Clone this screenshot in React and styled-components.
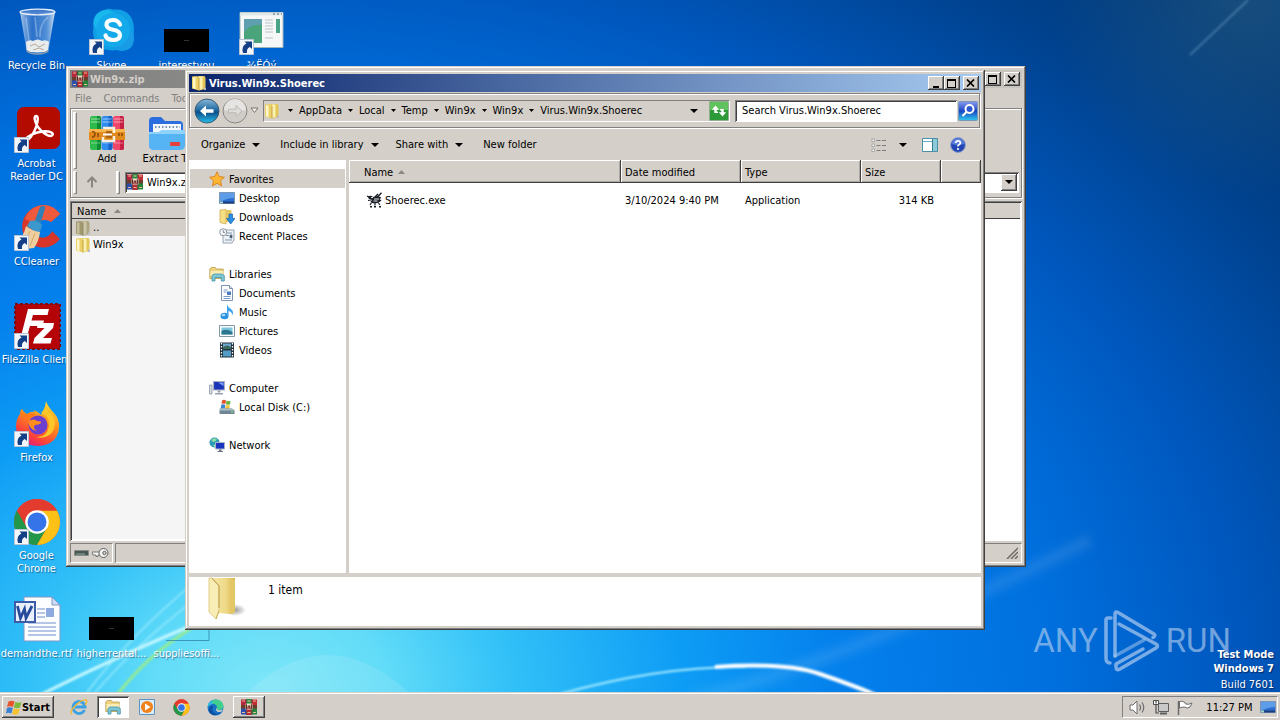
import React from "react";
import styled, { createGlobalStyle, css } from "styled-components";

const FACE = "#d4cfc8";

const GlobalStyle = createGlobalStyle`
  *, *::before, *::after { box-sizing: border-box; }
  html, body, #root { height: 100%; margin: 0; }
  body {
    font: 11px/13px "DejaVu Sans Condensed", "DejaVu Sans", "Noto Sans", sans-serif;
    color: #000;
    overflow: hidden;
  }
  button, input, select { font: inherit; color: inherit; margin: 0; padding: 0; border: 0; }
  svg { display: block; flex: none; }
`;

const raised = css`
  background: ${FACE};
  box-shadow: inset -1px -1px #404040, inset 1px 1px #fff, inset -2px -2px #808080;
`;
const sunken = css`
  box-shadow: inset 1px 1px #808080, inset -1px -1px #fff, inset 2px 2px #404040;
`;

/* ---------- page ---------- */

const Screen = styled.div`
  height: 100vh;
  display: flex;
  flex-direction: column;
  background: #0068d0;
`;

const Desktop = styled.main`
  flex: 1;
  min-height: 0;
  position: relative;
  overflow: hidden;
`;

const WallpaperArt = styled.svg`
  position: absolute;
  inset: 0;
  width: 100%;
  height: 100%;
`;

const IconGrid = styled.div`
  position: relative;
  display: grid;
  grid-template-columns: repeat(4, 73px);
  grid-auto-rows: 98px;
  column-gap: 2px;
  padding-top: 8px;
`;

const Shortcut = styled.button`
  grid-column: ${(p) => p.$col};
  grid-row: ${(p) => p.$row};
  display: flex;
  flex-direction: column;
  align-items: center;
  justify-content: flex-start;
  gap: 3px;
  background: none;
  color: #fff;
  text-align: center;
  text-shadow: 1px 1px 1px rgba(0, 20, 70, 0.5);
`;

const ShortcutLabel = styled.span`
  width: max-content;
  max-width: 76px;
`;

const Brand = styled.div`
  position: absolute;
  right: 49px;
  bottom: 20px;
  display: flex;
  align-items: center;
  gap: 5px;
  color: rgba(190, 212, 240, 0.6);
  font: 33px/62px "Roboto", sans-serif;
`;

const BuildInfo = styled.div`
  position: absolute;
  right: 6px;
  bottom: 0;
  color: #fff;
  text-align: right;
  font-weight: 700;
  line-height: 14px;
  text-shadow: 1px 1px 1px rgba(0, 20, 70, 0.7);
  p { margin: 0; }
  p:last-child { margin-top: 2px; font-weight: 400; }
`;

/* ---------- windows ---------- */

const Window = styled.section`
  position: absolute;
  left: ${(p) => p.$x}px;
  top: ${(p) => p.$y}px;
  width: ${(p) => p.$w}px;
  min-height: ${(p) => p.$h}px;
  padding: 4px;
  display: flex;
  flex-direction: column;
  background: ${FACE};
  box-shadow: inset -1px -1px #404040, inset 1px 1px ${FACE}, inset -2px -2px #808080, inset 2px 2px #fff;
`;

const TitleBar = styled.header`
  height: 18px;
  display: flex;
  align-items: center;
  gap: 2px;
  padding: 0 2px;
  color: ${(p) => (p.$active ? "#fff" : "#d4cfc8")};
  background: ${(p) =>
    p.$active
      ? "linear-gradient(90deg, #0a246a, #a6caf0)"
      : "linear-gradient(90deg, #808080, #c8c4be)"};
`;

const TitleText = styled.h1`
  flex: 1;
  margin: 0;
  font-size: 11px;
  font-weight: 700;
`;

const TitleButtons = styled.div`
  display: flex;
  button:last-child { margin-left: 3px; }
`;

const TitleButton = styled.button`
  width: 16px;
  height: 14px;
  display: grid;
  place-items: center;
  ${raised}
`;

/* ---------- explorer ---------- */

const Rebar = styled.div`
  height: 35px;
  margin: 1px 1px 1px 0;
  padding: 0 1px 0 3px;
  display: flex;
  align-items: center;
  border: 1px solid #808080;
  box-shadow: inset 1px 1px #fff, 1px 1px #fff;
`;

const NavButton = styled.button`
  width: ${(p) => p.$w}px;
  height: 26px;
  background: none;
  display: grid;
  place-items: center;
`;

const AddressBar = styled.nav`
  flex: 1;
  height: 22px;
  margin-left: 4px;
  display: flex;
  align-items: center;
  border: 1px solid;
  border-color: #808080 #fff #fff #808080;
`;

const FolderSlot = styled.span`
  width: 24px;
`;

const Crumb = styled.a`
  color: inherit;
  text-decoration: none;
  padding: 0 6px;
`;

const IconButton = styled.button`
  width: ${(p) => p.$w || 20}px;
  height: 22px;
  display: grid;
  place-items: center;
  background: none;
`;

const SearchInput = styled.input`
  width: 222px;
  height: 22px;
  margin-left: 5px;
  padding: 0 7px;
  background: #fff;
  ${sunken}
  &::placeholder { color: #000; opacity: 1; }
`;

const CommandBar = styled.div`
  height: 31px;
  padding: 0 12px;
  display: flex;
  align-items: center;
`;

const Command = styled.button`
  display: flex;
  align-items: center;
  gap: 7px;
  margin-right: ${(p) => p.$gap || 20}px;
  background: none;
`;

const Spacer = styled.span`
  flex: 1;
`;

const ExplorerBody = styled.div`
  flex: 1;
  display: flex;
`;

const NavPane = styled.nav`
  width: 157px;
  padding: 9px 1px 0;
  background: #fff;
`;

const NavGroup = styled.ul`
  list-style: none;
  margin: 0 0 19px;
  padding: 0;
`;

const NavItem = styled.a`
  height: 19px;
  display: flex;
  align-items: center;
  gap: 4px;
  padding-top: 1px;
  padding-left: ${(p) => (p.$child ? 29 : 19)}px;
  color: inherit;
  text-decoration: none;
  background: ${(p) => (p.$selected ? FACE : "none")};
`;

const FilePane = styled.div`
  flex: 1;
  margin-left: 3px;
  background: #fff;
`;

const FileTable = styled.table`
  width: 100%;
  table-layout: fixed;
  border-collapse: separate;
  border-spacing: 0;
  th {
    height: 23px;
    padding: 1px 4px 0;
    text-align: left;
    font-weight: 400;
    background: ${FACE};
    box-shadow: inset -1px -1px #404040, inset 1px 1px #fff, inset -2px -2px #aca8a0;
  }
  th:first-child { padding-left: 15px; }
  td { padding: 8px 4px 0; height: 26px; }
  td:first-child { padding-left: 18px; }
  td:nth-child(4) { text-align: right; padding-right: 7px; }
`;

const Inline = styled.span`
  display: flex;
  align-items: center;
  gap: ${(p) => p.$gap}px;
`;

const DetailsPane = styled.footer`
  height: 49px;
  margin-top: 4px;
  padding-left: 18px;
  display: flex;
  gap: 21px;
  background: #fff;
  font-size: 12px;
  p { margin: 7px 0 0; }
`;

/* ---------- archive manager ---------- */

const MenuBar = styled.nav`
  height: 20px;
  display: flex;
  align-items: center;
  gap: 12px;
  padding-left: 5px;
  color: #808080;
  button { background: none; }
`;

const ToolArea = styled.div`
  height: 90px;
  border: 1px solid #808080;
  box-shadow: inset 1px 1px #fff, 1px 1px #fff;
  padding: 2px;
  display: flex;
  flex-direction: column;
`;

const Band = styled.div`
  height: ${(p) => p.$h}px;
  display: flex;
  align-items: center;
`;

const Grip = styled.span`
  width: 4px;
  height: calc(100% - 2px);
  border: 1px solid;
  border-color: #fff #808080 #808080 #fff;
  border-left-width: 2px;
`;

const ToolButton = styled.button`
  width: 60px;
  display: flex;
  flex-direction: column;
  align-items: center;
  gap: 1px;
  background: none;
  white-space: nowrap;
`;

const UpButton = styled.button`
  width: 39px;
  height: 22px;
  padding-left: 9px;
  display: flex;
  align-items: center;
  background: none;
`;

const Combo = styled.div`
  flex: 1;
  height: 21px;
  margin-left: 5px;
  padding: 2px;
  display: flex;
  align-items: center;
  gap: 3px;
  background: #fff;
  ${sunken}
  select { flex: 1; appearance: none; background: none; padding-left: 1px; }
`;

const ComboArrow = styled.span`
  width: 16px;
  height: 17px;
  display: grid;
  place-items: center;
  pointer-events: none;
  ${raised}
`;

const ArchiveList = styled.div`
  flex: 1;
  margin-top: 3px;
  padding: 2px;
  background: #fff;
  ${sunken}
`;

const ArchiveHead = styled.div`
  height: 16px;
  display: flex;
  align-items: center;
  gap: 8px;
  padding-left: 5px;
  background: ${FACE};
  box-shadow: inset 0 -1px #404040;
`;

const ArchiveColumn = styled.div`
  width: 240px;
  height: 320px;
  background: #f5f5f5;
`;

const ArchiveRow = styled.div`
  height: 17px;
  display: flex;
  align-items: center;
  gap: 2px;
  padding-left: 3px;
  background: ${(p) => (p.$selected ? FACE : "none")};
`;

const StatusBar = styled.footer`
  height: 20px;
  margin-top: 2px;
  display: flex;
  gap: 2px;
`;

const StatusCell = styled.div`
  flex: ${(p) => (p.$fill ? 1 : "none")};
  display: flex;
  align-items: center;
  justify-content: ${(p) => (p.$fill ? "flex-end" : "flex-start")};
  gap: 3px;
  padding: 0 3px;
  border: 1px solid;
  border-color: #808080 #fff #fff #808080;
`;

/* ---------- taskbar ---------- */

const Taskbar = styled.footer`
  height: 28px;
  flex: none;
  padding: 4px 2px 2px;
  display: flex;
  align-items: center;
  background: ${FACE};
  box-shadow: inset 0 1px ${FACE}, inset 0 2px #fff;
`;

const StartButton = styled.button`
  width: 52px;
  height: 22px;
  margin-right: 9px;
  display: flex;
  align-items: center;
  justify-content: center;
  font-weight: 700;
  ${raised}
`;

const TaskButton = styled.button`
  width: 32px;
  height: 22px;
  margin-right: 2px;
  display: grid;
  place-items: center;
  background: none;
  ${(p) => p.$state === "open" && raised}
  ${(p) => p.$state === "pressed" && css`background: #fff; ${sunken}`}
`;

const Tray = styled.div`
  width: 156px;
  height: 22px;
  display: flex;
  align-items: center;
  justify-content: space-between;
  padding: 0 1px 0 6px;
  border: 1px solid;
  border-color: #808080 #fff #fff #808080;
`;

const Clock = styled.time`
  margin-left: 6px;
  white-space: nowrap;
`;

/* ---------- small glyphs ---------- */

const Arrow = ({ w = 8 }) => (
  <svg width={w} height={w / 2} viewBox="0 0 8 4"><path d="M0 0h8L4 4z" fill="#000" /></svg>
);
const CrumbArrow = () => (
  <svg width="5" height="3" viewBox="0 0 5 3"><path d="M0 0h5L2.500 3z" fill="#000" /></svg>
);
const SortUp = () => (
  <svg width="7" height="4" viewBox="0 0 7 4"><path d="M0 4h7L3.500 0z" fill="#8c8880" /></svg>
);
const MinGlyph = () => (
  <svg width="10" height="9" viewBox="0 0 10 9"><path d="M2 7h6v2H2z" /></svg>
);
const MaxGlyph = () => (
  <svg width="10" height="9" viewBox="0 0 10 9"><path d="M0 0h9v9H0zM1 2v6h7V2z" fillRule="evenodd" /></svg>
);
const CloseGlyph = () => (
  <svg width="10" height="8" viewBox="0 0 10 8"><path d="M1 .5l7 7M8 .5l-7 7" stroke="#000" strokeWidth="1.700" /></svg>
);

/* ---------- icons ---------- */

const FolderIcon = ({ dim }) => (
  <svg width="16" height="16" viewBox="0 0 16 16" opacity={dim ? 0.8 : 1}>
    <path d="M7 1h6.500l1 2v11L8 15.500z" fill={dim ? "#a39b70" : "#e3c755"} />
    <path d="M8 1.500h3.500V14L8 15z" fill={dim ? "#ccc6a2" : "#faf0b0"} />
    <path d="M1 1.500L6 1l2 2v12.500L1 13.500z" fill={dim ? "#958b58" : "#ecd068"} />
    <path d="M2 2.500h2.500V14L2 13.200z" fill={dim ? "#c2bb92" : "#fdf6c8"} />
    <path d="M8 3v12.500" stroke={dim ? "#7a7148" : "#b89636"} strokeWidth=".8" />
    <path d="M13 12l2 1v2h-2z" fill="#b8bcc4" />
  </svg>
);

const WinRarIcon = ({ size = 16 }) => (
  <svg width={size} height={size} viewBox="0 0 16 16">
    <path d="M0 .5h5.300v7H0z" fill="#b8253f" />
    <path d="M5.300 0h5.400v7.500H5.300z" fill="#2d8b43" />
    <path d="M10.700 .5H16v7h-5.300z" fill="#c22c33" />
    <path d="M0 8.500h5.300v7H0z" fill="#2c4fae" />
    <path d="M5.300 8.500h5.400V16H5.300z" fill="#b62f34" />
    <path d="M10.700 8.500H16v7h-5.300z" fill="#27823b" />
    <path d="M0 6h16v3.500H0z" fill="#6a3d2c" />
    <path d="M1 2h3M6.500 2h3M12 2h3M1 13.500h3M6.500 13.500h3M12 13.500h3" stroke="#f0c8a0" strokeWidth=".9" />
    <path d="M4.500 4.500h7v6h-7z" fill="#eee4c8" />
    <path d="M5.500 5.500v3.700h1.700V7h1.400v2.200h1.700V5.500" fill="none" stroke="#7d2a2e" strokeWidth="1.100" />
    <path d="M5.300 0v16M10.700 0v16" stroke="#33231f" strokeWidth=".5" />
  </svg>
);

const AddArchiveIcon = () => (
  <svg width="36" height="36" viewBox="0 0 36 36">
    {[["#2dbb4c", "#0d8f34", 1], ["#2f8df0", "#1661c6", 12.500], ["#f0466a", "#c81f44", 24]].map(([a, b, x]) => (
      <g key={x}>
        <rect x={x} y="1" width="11" height="34" rx="2.500" fill={a} />
        <path d={`M${x + 7} 1h2a2 2 0 0 1 2 2v30a2 2 0 0 1-2 2h-2z`} fill={b} />
        <path d={`M${x + 1} 4h9M${x + 1} 7h9`} stroke="#fff" strokeOpacity=".55" />
        <path d={`M${x + 1} 28h9`} stroke="#fff" strokeOpacity=".4" />
      </g>
    ))}
    <path d="M0 14h36v11H0z" fill="#e38a1c" />
    <path d="M0 14h36v3H0z" fill="#f7b54c" />
    <path d="M3 17q3-1 3 2t-3 3M9 18v4M30 18v3M33 18v3" stroke="#8a4a0c" strokeWidth="1.500" fill="none" />
    <path d="M14 13h11v5M25 21v5H14v-4" fill="none" stroke="#f8efe0" strokeWidth="2.500" />
    <path d="M17 16h6v7h-6z" fill="#b0640f" />
    <path d="M14 19.500h9" stroke="#fff" strokeWidth="2" />
  </svg>
);

const ExtractIcon = () => (
  <svg width="38" height="36" viewBox="0 0 38 36">
    <path d="M1 6q0-4 4-4h8l4 4h14q4 0 4 4v20q0 4-4 4H5q-4 0-4-4z" fill="#2c6ee0" />
    <path d="M5 9h28v14H5z" fill="#f4f8fc" />
    <path d="M7 12h25" stroke="#7a94b4" strokeWidth="2" strokeDasharray="1.500 2" />
    <path d="M1 17h10l3-2h21q2 0 2 2v13q0 5-5 5H6q-5 0-5-5z" fill="#56b4f5" />
    <path d="M1 17h10l3-2h21q2 0 2 2v2H1z" fill="#8fd2fb" />
    <rect x="22" y="27" width="10" height="4" rx="1" fill="#e5403c" />
  </svg>
);

const Badge = () => (
  <g>
    <path d="M1.500 31.500h14v15h-14z" fill="#f3f6fa" stroke="#b9c4d4" />
    <path d="M5 45q-2-7 3.500-9.500L6.500 33.500h7.500v7.500l-2.200-2q-3.500 1.500-2.800 6z" fill="#123f86" />
  </g>
);

const Icon48 = ({ children, shortcut = true }) => (
  <svg width="48" height="48" viewBox="0 0 48 48">
    {children}
    {shortcut && <Badge />}
  </svg>
);

const RecycleArt = () => (
  <Icon48 shortcut={false}>
    <defs>
      <linearGradient id="bin" x1="0" x2="1">
        <stop offset="0" stopColor="#c9dcf2" stopOpacity=".85" />
        <stop offset=".35" stopColor="#4f82cc" stopOpacity=".55" />
        <stop offset=".75" stopColor="#86aee0" stopOpacity=".6" />
        <stop offset="1" stopColor="#e4eefa" stopOpacity=".9" />
      </linearGradient>
    </defs>
    <path d="M7 4l6.500 38q1 2.500 11 2.500T35.500 42L42 4z" fill="url(#bin)" />
    <path d="M13 34q3-3 7-1 5-3 9 0 4-2 7 1l-1 8q-2 2.500-10.500 2.500T13.500 42z" fill="#e9ecec" />
    <path d="M17 38l5-2 4 3 6-3M20 42l6-2 5 2" stroke="#b6a99c" fill="none" />
    <ellipse cx="24.500" cy="4" rx="17.500" ry="2.800" fill="#5c8bd0" fillOpacity=".7" stroke="#e6eff8" strokeWidth="1.300" />
    <path d="M13 10l3 22M35 9q-9 8-8 20M22 9l2 20" stroke="#fff" strokeOpacity=".3" strokeWidth="1.500" fill="none" />
    <path d="M13.500 42.500q3 3.500 11 3.500t11-3.500" fill="none" stroke="#8d9cb0" strokeWidth="1.500" />
  </Icon48>
);

const SkypeArt = () => (
  <Icon48>
    <path d="M16 2q5-2 9-.5Q45 0 46 21q0 3-.5 5Q48 42 34 43q-3 0-5-1Q6 45 5 24q0-2 .5-4Q3 6 16 2z" fill="#0e9fe4" />
    <circle cx="18" cy="14" r="12" fill="#19b9ee" />
    <circle cx="34" cy="30" r="12" fill="#1a9be6" />
    <circle cx="25" cy="22" r="17" fill="#14a9ea" />
    <path d="M32 16.500Q30 12 25 12q-6.500 0-6.500 4.800 0 3.700 6.700 5 6.800 1.300 6.800 5.200 0 5-7 5-6 0-7.500-4.500" fill="none" stroke="#fff" strokeWidth="4.200" strokeLinecap="round" />
  </Icon48>
);

const BlackThumb = () => (
  <Icon48 shortcut={false}>
    <path d="M1 21h45v23H1z" fill="#000" />
    <path d="M21 32.500h5" stroke="#333" />
  </Icon48>
);

const ClearThumb = () => (
  <Icon48 shortcut={false}>
    <path d="M3 44.500h43V20" fill="none" stroke="#2e7fa8" strokeOpacity=".75" />
  </Icon48>
);

const AppWindowArt = () => (
  <Icon48>
    <path d="M2 4.500h43v35H2z" fill="#f6f8f8" stroke="#9fb4b8" />
    <path d="M2 4.500h43v3H2z" fill="#dfe9ea" />
    <path d="M35 6h2M39 6h2M43 6h1" stroke="#51666a" />
    <path d="M6 11h18v24H6z" fill="#5f9fb0" />
    <path d="M6 24q8-9 18-7v18H6z" fill="#49a47c" />
    <path d="M27 12h8M27 15h8M27 18h8M27 21h8M27 24h8M27 30h8" stroke="#b9c4c6" />
    <path d="M38 11h4v14h-4z" fill="#49a487" />
  </Icon48>
);

const AcrobatArt = () => (
  <Icon48>
    <rect x="4" y="1" width="43" height="42" rx="7" fill="#b30b00" />
    <path d="M12 33.500c3 3 9-6 11.500-13.500 1.500-5 2-10-.5-10s-1.500 6 2 11c3.500 5 11 10.500 14 8.500s-2-5-10-4-15 5-17 8z" fill="none" stroke="#fff" strokeWidth="2.400" strokeLinejoin="round" />
  </Icon48>
);

const CCleanerArt = () => (
  <Icon48>
    <path d="M47 10A21 21 0 1 0 47 35l-8-8a10 10 0 1 1-1-9z" fill="#d8362a" />
    <path d="M47 10Q38-2 25 2q-10 3-13 13l11 5q7-7 15-2z" fill="#ef5a3c" />
    <path d="M30 2q3 0 2 2.500L27 21l-6-2 6-16z" fill="#2f7fb8" />
    <path d="M17 17q7-2 12 4l-2 7q-8-1-13-6z" fill="#3c97cc" />
    <path d="M13 22q6 5 14 6-1 9-6 16-10 2-18-5 8-7 10-17z" fill="#efcfa0" />
    <path d="M17 27l-6 13M22 29l-5 13" stroke="#d6a868" />
  </Icon48>
);

const FileZillaArt = () => (
  <Icon48>
    <path d="M2 2h45v45H2z" fill="#b40408" stroke="#7a0c14" strokeWidth="2" strokeDasharray="3 2" />
    <path d="M15 7h21l-1.500 6H20l-1.500 5.500H31L29.500 24H17l-3.500 12H7.500z" fill="#fff" />
    <path d="M25 21h16l-1 5-10 10h9l-1.500 5.500H20l1.500-5.500 10-10H24z" fill="#fff" />
  </Icon48>
);

const FirefoxArt = () => (
  <Icon48>
    <defs>
      <linearGradient id="fox" x1=".8" y1="0" x2=".3" y2="1">
        <stop offset="0" stopColor="#ffe22e" /><stop offset=".45" stopColor="#ff8a1c" />
        <stop offset=".8" stopColor="#fb3f3c" /><stop offset="1" stopColor="#e5197c" />
      </linearGradient>
    </defs>
    <path d="M33 1q2 6 8 12 6 7 5 15-2 17-21 18Q4 45 3 27q0-8 4-13 0-4 2-5 2 4 5 5 4-3 8-2-1-1-1-2 6 3 7 5 4-5 5-14z" fill="url(#fox)" />
    <path d="M7 14q2-1 7 0 4-2 9 0-5 4-6 8z" fill="#ff7a1a" />
    <circle cx="25" cy="25" r="9.500" fill="#6b3fd0" />
    <path d="M16 21q5-3 8 0 5 0 4 2-2 2-6 2-3 3 2 6-6-1-8-6z" fill="#ff8d20" />
    <path d="M28 13q9 3 8 13-2 12-13 11 13 3 18-8 3-10-4-16-5-5-4-10-1 6-5 10z" fill="#ffc62a" />
  </Icon48>
);

const ChromeMark = ({ badge, size }) => (
  <svg width={size} height={size} viewBox="0 0 48 48">
    <circle cx="24" cy="24" r="23" fill="#ea4335" />
    <path d="M4.100 12.500A23 23 0 0 0 24 47l10-17.200-10 5.700-10-5.700z" fill="#229649" />
    <path d="M24 47A23 23 0 0 0 43.900 12.500H24l10 17.300z" fill="#fbc116" />
    <path d="M4.100 12.500L14 29.800A11.500 11.500 0 0 1 24 12.500h19.900A23 23 0 0 0 4.100 12.500z" fill="#e33b2e" />
    <circle cx="24" cy="24" r="11.800" fill="#fff" />
    <circle cx="24" cy="24" r="9.500" fill="#3474e8" />
    {badge && <Badge />}
  </svg>
);

const WordDocArt = () => (
  <Icon48 shortcut={false}>
    <path d="M11 1h28l8 8v36H11z" fill="#fbfdff" stroke="#7f97c6" />
    <path d="M39 1v8h8z" fill="#cfdcf2" stroke="#7f97c6" />
    <path d="M24 13h8M24 17h8M24 21h8M15 27h28M15 31h28M15 35h28M15 39h28" stroke="#9fb4dc" strokeWidth="1.400" />
    <path d="M33 12h8v9h-8z" fill="#8ea9de" />
    <path d="M2 6h20v20H2z" fill="#e9f0fb" stroke="#3d5da8" strokeWidth="2" />
    <path d="M4.500 10l3 12 4-9 1.500 9L19 10" fill="none" stroke="#274a9c" strokeWidth="2.800" />
  </Icon48>
);

const navIcons = {
  star: (
    <path d="M8 .8l2.200 4.800 5.200.6-3.900 3.500 1.100 5.200L8 12.300l-4.600 2.600 1.100-5.200L.6 6.200l5.200-.6z" fill="#fdb733" stroke="#d9801a" strokeWidth=".9" />
  ),
  desktop: (
    <>
      <path d="M.5 2.500h15v11H.5z" fill="#2a6fd0" stroke="#7c93b4" />
      <path d="M1 3h14v5Q8 8 1 12z" fill="#5c9ce8" />
      <path d="M1 11.500h14v2H1z" fill="#1b3f7a" /><path d="M1 11.500h3v2H1z" fill="#a8d8c8" />
    </>
  ),
  downloads: (
    <>
      <path d="M1 1l6-.5V15l-6-1.500z" fill="#f6df86" stroke="#c8a440" strokeWidth=".7" />
      <path d="M7 1h5.500v12H7z" fill="#e5c761" />
      <path d="M10 5h3.500v4.500H16L11.700 15 7.500 9.500H10z" fill="#2b8fe4" stroke="#1262b0" strokeWidth=".7" />
    </>
  ),
  recent: (
    <>
      <path d="M4 2h11v10l-2 3H4z" fill="#eef2f5" stroke="#8b9aa8" strokeWidth=".9" />
      <path d="M7 5h6M7 7.500h3M11 7h2v3h-2zM6 12h7" stroke="#7d97b4" />
      <circle cx="4.200" cy="4.200" r="3.500" fill="#f7f9fa" stroke="#8894a0" />
      <path d="M4.200 2.200v2.200H6" stroke="#667" fill="none" strokeWidth=".8" />
    </>
  ),
  libraries: (
    <>
      <path d="M.8 3l1.500-1.500h4L7.500 3h6.700v9.500H.8z" fill="#eed27c" stroke="#b89a4c" strokeWidth=".8" />
      <path d="M1.500 5h13v5h-13z" fill="#f9ecb4" />
      <path d="M3 15V9.500L5 8h8l2.300 1.500V15h-3v-3.500H6V15z" fill="#7cc6d6" stroke="#4a94a8" strokeWidth=".8" />
    </>
  ),
  documents: (
    <>
      <path d="M2.500.5h8l3 3v12h-11z" fill="#fff" stroke="#7f93b0" />
      <path d="M10.500.5v3h3" fill="#d5e0ee" stroke="#7f93b0" />
      <path d="M4.500 5h4M4.500 7h3M4.500 11.500h7M4.500 13.500h7" stroke="#7a9bd0" />
      <path d="M8 6.500h4V10H8z" fill="#4a7cc4" />
    </>
  ),
  music: (
    <>
      <ellipse cx="5.500" cy="12" rx="4" ry="3.300" fill="#2a92de" />
      <path d="M8 12V.5q1 3 4 4.500 3 2 1.500 6.500-.5-4-4-4.500v5z" fill="#3fa4ea" />
      <ellipse cx="4.500" cy="11" rx="1.800" ry="1.200" fill="#a6dafa" />
    </>
  ),
  pictures: (
    <>
      <path d="M.5 2.500h15v11H.5z" fill="#fafcfd" stroke="#8397a4" />
      <path d="M2.500 4.500h11v7h-11z" fill="#7ec4dc" />
      <path d="M2.500 8q5-3 11 1v2.500h-11z" fill="#2c7590" />
    </>
  ),
  videos: (
    <>
      <path d="M1 .5h14v15H1z" fill="#22303c" />
      <path d="M4 1.500h8V7H4z" fill="#6fa8cf" /><path d="M4 8.500h8v6H4z" fill="#549cc8" />
      <path d="M4 5q4-3 8 0v2H4z" fill="#3a6a5c" />
      <path d="M2.500 1v14M13.500 1v14" stroke="#fff" strokeWidth="1.300" strokeDasharray="1.500 1.500" />
    </>
  ),
  computer: (
    <>
      <path d="M4.500 1.500h11v8.500h-11z" fill="#1b35b8" stroke="#a9b2c4" strokeWidth="1.200" />
      <path d="M9 2.500h5.500V6z" fill="#7fa0f0" />
      <path d="M8.500 10.500h3v2h-3zM6 13h8v1.500H6z" fill="#98a2b0" />
      <path d="M.5 5h2.500v9H.5z" fill="#d6dbe2" stroke="#8e98a6" strokeWidth=".8" />
    </>
  ),
  disk: (
    <>
      <path d="M3 1.500q2-1.500 4 0L6.500 5q-2-1-4 0z" fill="#e2532c" /><path d="M7.500 1.500q2 1.200 4 .3L11 5.500q-2 .8-4-.3z" fill="#6db33b" />
      <path d="M2.300 5.700q2-1 4 0L5.800 9.500H1.700z" fill="#3d83d8" /><path d="M6.800 6q2 1 4 .3L10.300 10H6.300z" fill="#f3c12e" />
      <path d="M1 9.500h12l2.500 2v3.500H.5v-3.500z" fill="#6f8794" />
      <path d="M1 9.500h12l2.500 2H.5z" fill="#a9bbc4" /><path d="M12 13h2" stroke="#8cf070" />
    </>
  ),
  network: (
    <>
      <circle cx="5.500" cy="5.500" r="5" fill="#2a9bb8" />
      <path d="M2 3q3-3 6-1-1 3-4 3zM4 8q3-1 4 1l-2 1.500z" fill="#8fdca0" />
      <path d="M6.500 5.500h9v6.500h-9z" fill="#1a34c0" stroke="#aab4c8" />
      <path d="M10 12.500h2.500v1.500H10zM8.500 14h5.500v1H8.500z" fill="#6c7684" />
    </>
  ),
};

const NavGlyph = ({ name }) => (
  <svg width="16" height="16" viewBox="0 0 16 16">{navIcons[name]}</svg>
);

const InsectExe = () => (
  <svg width="16" height="16" viewBox="0 0 16 16">
    <path d="M10 5.500L14.500.8M8 5l3-3" stroke="#1a2026" strokeWidth="1.400" fill="none" />
    <path d="M1 4.500q3-1.500 5 .5l2-.5q5-1 6.500 1.500l-2 1 2 1.500-2 1.500q-3 2-7.500 1L3.500 9.500 5 8 1.500 6.500z" fill="#1a2026" />
    <path d="M4 5.500h2M7 7h5M6.500 9h4" stroke="#e4e8ea" />
    <path d="M0 4l3 1.500M1 8.500L4 8M4.500 10.500L3 13M8 11v2.500M11 10.500l2 2.500" stroke="#1a2026" strokeWidth="1.200" />
    <path d="M3 14.800h2M7 14.800h2M12 14.800h2" stroke="#1a2026" strokeWidth="1.500" />
  </svg>
);

const BackCircle = () => (
  <svg width="26" height="26" viewBox="0 0 26 26">
    <defs>
      <linearGradient id="back" y1="0" y2="1" x2="0">
        <stop offset="0" stopColor="#8cb8d8" /><stop offset=".45" stopColor="#1f6ca4" />
        <stop offset=".55" stopColor="#0b4f88" /><stop offset="1" stopColor="#27c0ee" />
      </linearGradient>
    </defs>
    <circle cx="13" cy="13" r="12" fill="url(#back)" stroke="#3c5a74" />
    <path d="M6 13l6-5.500v3.700h7.500v3.600H12v3.700z" fill="#fff" />
  </svg>
);

const ForwardCircle = () => (
  <svg width="26" height="26" viewBox="0 0 26 26">
    <circle cx="13" cy="13" r="12" fill="#cfccc8" stroke="#8a8884" />
    <path d="M2 12a11 11 0 0 1 22 0q-11 3-22 0z" fill="#e6e4e2" />
    <path d="M20 13l-6-5.500v3.700H6.500v3.600H14v3.700z" fill="#dedbd8" stroke="#b4b1ad" strokeWidth=".8" />
  </svg>
);

const HistoryArrow = () => (
  <svg width="9" height="7" viewBox="0 0 9 7"><path d="M1 1h7L4.500 5.500z" fill="#f4f2f0" stroke="#77746e" /></svg>
);

const RefreshIcon = () => (
  <svg width="20" height="20" viewBox="0 0 20 20">
    <rect x=".5" y=".5" width="19" height="19" rx="1" fill="#2c9a38" stroke="#8fae8c" />
    <path d="M1 1h18v8H1z" fill="#5fc25c" />
    <path d="M6.500 4.500L2.800 8.800h2.500V12h2.400V8.800h2.500zM13.500 15.500l3.700-4.300h-2.500V8h-2.400v3.200H9.800z" fill="#fff" />
    <path d="M6 10.500h3v1.500H6zM11 8h3v1.500h-3z" fill="#fff" />
  </svg>
);

const SearchIcon = () => (
  <svg width="20" height="20" viewBox="0 0 20 20">
    <defs><linearGradient id="srch" y1="0" y2="1" x2="0"><stop offset="0" stopColor="#8a9cf0" /><stop offset=".5" stopColor="#1846c4" /><stop offset="1" stopColor="#30c8ee" /></linearGradient></defs>
    <rect x=".5" y=".5" width="19" height="19" rx="1" fill="url(#srch)" stroke="#7b98b8" />
    <circle cx="11.500" cy="8" r="4" fill="#2c58d0" stroke="#fff" strokeWidth="2" />
    <path d="M8.500 11L4.500 15" stroke="#fff" strokeWidth="2.200" />
  </svg>
);

const ViewIcon = () => (
  <svg width="16" height="14" viewBox="0 0 16 14">
    {[2, 7, 12].map((y) => (
      <g key={y}>
        <rect x="1" y={y - 1} width="2.500" height="2.500" fill="#fff" stroke="#9a9a9a" strokeWidth=".8" />
        <path d={`M5.500 ${y + 0.5}h4M11 ${y + 0.5}h4`} stroke="#7c7c7c" />
      </g>
    ))}
  </svg>
);

const PreviewIcon = () => (
  <svg width="16" height="14" viewBox="0 0 16 14">
    <path d="M.5.5h15v13H.5z" fill="#fff" stroke="#4a90a8" />
    <path d="M1 3.500h9" stroke="#6aaec4" /><path d="M10 1h5v12h-5z" fill="#8ccad8" /><path d="M10.500 1v12" stroke="#357d94" />
  </svg>
);

const HelpIcon = () => (
  <svg width="16" height="16" viewBox="0 0 16 16">
    <circle cx="8" cy="8" r="7.400" fill="#2446b4" stroke="#8ea0cc" />
    <path d="M2 7a6 6 0 0 1 12 0q-6 2-12 0z" fill="#5c80dc" />
    <path d="M5.700 6q.2-2.200 2.400-2.200T10.400 6Q10.300 7 9 7.800T8 9.500" fill="none" stroke="#fff" strokeWidth="1.700" />
    <circle cx="8" cy="12" r="1.100" fill="#fff" />
  </svg>
);

const BigFolder = () => (
  <svg width="40" height="44" viewBox="0 0 40 44">
    <defs>
      <linearGradient id="leaf" x2="1"><stop offset="0" stopColor="#f6e8a8" /><stop offset=".6" stopColor="#efd986" /><stop offset="1" stopColor="#d8b650" /></linearGradient>
      <radialGradient id="shade"><stop offset="0" stopColor="#000" stopOpacity=".4" /><stop offset="1" stopColor="#000" stopOpacity="0" /></radialGradient>
    </defs>
    <ellipse cx="28" cy="33" rx="11" ry="6" fill="url(#shade)" />
    <path d="M5 1h23v32q0 4-4 4l-13-1z" fill="url(#leaf)" />
    <path d="M24 3h4v31q-1 3-4 2z" fill="#e3c766" />
    <path d="M2 1l3 0 7 8v24l-3 9L2 35z" fill="#f9edb6" stroke="#dcc474" strokeWidth=".8" />
    <path d="M5 1l7 8v22" fill="none" stroke="#b89a48" />
    <path d="M9 42l3-8" stroke="#cdae56" />
  </svg>
);

const UpArrow = () => (
  <svg width="12" height="12" viewBox="0 0 12 12"><path d="M6 11.500V2M1.500 6L6 1.500 10.500 6" stroke="#8a8680" strokeWidth="2" fill="none" /></svg>
);

const DriveGlyph = () => (
  <svg width="15" height="6" viewBox="0 0 15 6"><path d="M.5.5h14v5H.5z" fill="#4a5654" stroke="#8a8c88" /><path d="M2 4h9" stroke="#8fae9c" /></svg>
);
const KeyGlyph = () => (
  <svg width="17" height="12" viewBox="0 0 17 12">
    <path d="M0 5h9v3H6v1.500H4V8H1z" fill="#f2f2f0" stroke="#606060" strokeWidth=".8" />
    <circle cx="11.500" cy="6" r="4.500" fill="#f2f2f0" stroke="#606060" /><circle cx="12.500" cy="6" r="1.700" fill={FACE} stroke="#606060" />
  </svg>
);
const SizeGrip = () => (
  <svg width="12" height="12" viewBox="0 0 12 12"><path d="M1 12L12 1M5 12l7-7M9 12l3-3" stroke="#706c66" strokeWidth="1.500" /></svg>
);

const WindowsFlag = () => (
  <svg width="16" height="15" viewBox="0 0 16 15">
    <path d="M2.500 1.500q3-1.500 6 0L7 7q-3-1.500-6 0z" fill="#e8552c" />
    <path d="M9.300 2q3 1.500 6.200 0L14 7.500q-3 1.300-6.200 0z" fill="#7cba3c" />
    <path d="M.9 8q3-1.500 6 0l-1.600 5.500q-3-1.500-5.300 0z" fill="#3a80d4" />
    <path d="M7.600 8.500q3 1.500 6.200 0l-1.600 5.500q-3 1.300-6 0z" fill="#f6c22e" />
  </svg>
);

const IEIcon = () => (
  <svg width="18" height="18" viewBox="0 0 18 18">
    <path d="M14.500 12A6 6 0 1 1 15 9H5" fill="none" stroke="#3aa2e4" strokeWidth="2.800" />
    <path d="M2 16q-3-2 3-8Q12 1 16 2q2 1-1 5" fill="none" stroke="#f0b834" strokeWidth="1.400" />
  </svg>
);

const MediaIcon = () => (
  <svg width="16" height="16" viewBox="0 0 16 16">
    <path d="M.5.5h15v15H.5z" fill="#dcecf8" stroke="#5b95c8" />
    <circle cx="8" cy="8" r="6" fill="#f0821c" />
    <path d="M6 4.500L11.500 8 6 11.500z" fill="#fff" />
  </svg>
);

const EdgeIcon = () => (
  <svg width="17" height="17" viewBox="0 0 17 17">
    <circle cx="8.500" cy="8.500" r="8" fill="#1873c8" />
    <path d="M.6 8Q2 .5 9 .5q7 .5 7.500 6.500 0 4-4.500 4-2.500 0-2.500-1.500Q10.500 8 9.500 6.500 7.500 4 4.500 5 2 6 .6 8z" fill="#42cf8e" />
    <path d="M.6 8Q1 2 7 1q-3 1.500-1.500 3.700Q2 5.500.6 8z" fill="#33b8e4" />
    <path d="M6.500 7q-3 4 1 7 3 2 7-1-4 4-8.500 3Q1 14 2 9.500 3 6 6.500 7z" fill="#0e4fa0" />
    <path d="M9.500 9q0 2 2.500 2.300 2 .2 4-.8-1 3-4.500 2.500Q8 12 9.500 9z" fill="#d4cfc8" />
  </svg>
);

const VolumeIcon = () => (
  <svg width="17" height="15" viewBox="0 0 17 15">
    <path d="M1 5h3l4-4v13l-4-4H1z" fill="#fff" stroke="#6c6c6c" />
    <path d="M10.500 4.500q2 3 0 6M13 2.500q3.500 5 0 10" fill="none" stroke="#6c6c6c" strokeWidth="1.200" />
  </svg>
);
const NetTrayIcon = () => (
  <svg width="16" height="15" viewBox="0 0 16 15">
    <path d="M5.500 3.500h10v8h-10z" fill="#c8c8c8" stroke="#5e5e5e" /><path d="M7 13.500h7" stroke="#5e5e5e" strokeWidth="2" />
    <path d="M.5.500h5v4h-5z" fill="#fff" stroke="#4e4e4e" /><path d="M3 4.500v8.500h3M3 .5v3" fill="none" stroke="#4e4e4e" strokeWidth="1.200" />
  </svg>
);
const FlagTrayIcon = () => (
  <svg width="16" height="15" viewBox="0 0 16 15">
    <path d="M1.500 1v14" stroke="#6a6a6a" strokeWidth="1.500" />
    <path d="M2.500 1.500q3-1 5.500 1l.5 1.500q3 1 6.500-1l-2 4q-3 2-5.500 0Q5 7 2.500 8z" fill="#fff" stroke="#6a6a6a" />
  </svg>
);

const BrandTriangle = () => (
  <svg width="58" height="62" viewBox="0 0 58 62" fill="none" stroke="#aecbf0" strokeOpacity=".7" strokeWidth="3.500" strokeLinejoin="round" strokeLinecap="round">
    <path d="M8 8H5Q3 8 3 10v38q0 5 4 5" />
    <path d="M12 46V4q0-3 3-1.500L51 24q2 2-1 3.500" />
    <path d="M16 14l37 20q3 2 0 4L17 59q-4 2-4-2v-3l27-15" />
    <path d="M12 46l29-16" strokeOpacity=".5" />
  </svg>
);

/* ---------- content ---------- */

const shortcuts = [
  ["Recycle Bin", 1, 1, <RecycleArt />],
  ["Skype", 2, 1, <SkypeArt />],
  ["interestyou", 3, 1, <BlackThumb />],
  ["¾ËÓý", 4, 1, <AppWindowArt />],
  ["Acrobat\nReader DC", 1, 2, <AcrobatArt />],
  ["CCleaner", 1, 3, <CCleanerArt />],
  ["FileZilla Client", 1, 4, <FileZillaArt />],
  ["Firefox", 1, 5, <FirefoxArt />],
  ["Google\nChrome", 1, 6, <ChromeMark size={48} badge />],
  ["demandthe.rtf", 1, 7, <WordDocArt />],
  ["higherrental...", 2, 7, <BlackThumb />],
  ["suppliesoffi...", 3, 7, <ClearThumb />],
];

const navGroups = [
  [["star", "Favorites"], ["desktop", "Desktop"], ["downloads", "Downloads"], ["recent", "Recent Places"]],
  [["libraries", "Libraries"], ["documents", "Documents"], ["music", "Music"], ["pictures", "Pictures"], ["videos", "Videos"]],
  [["computer", "Computer"], ["disk", "Local Disk (C:)"]],
  [["network", "Network"]],
];

const crumbs = ["AppData", "Local", "Temp", "Win9x", "Win9x", "Virus.Win9x.Shoerec"];

const Wallpaper = () => (
  <WallpaperArt viewBox="0 0 1280 692" preserveAspectRatio="none" aria-hidden="true">
    <defs>
      <radialGradient id="sky" gradientUnits="userSpaceOnUse" cx="0" cy="0" r="1300" gradientTransform="translate(270 690) scale(1 .74)">
        <stop offset="0" stopColor="#7fe6f8" />
        <stop offset=".09" stopColor="#62dcf8" />
        <stop offset=".18" stopColor="#34c2f8" />
        <stop offset=".32" stopColor="#0d9cf5" />
        <stop offset=".44" stopColor="#0480ec" />
        <stop offset=".6" stopColor="#0070de" />
        <stop offset=".75" stopColor="#0057bd" />
        <stop offset=".9" stopColor="#00428f" />
        <stop offset="1" stopColor="#003a7c" />
      </radialGradient>
      <radialGradient id="corner" gradientUnits="userSpaceOnUse" cx="1250" cy="0" r="200">
        <stop offset="0" stopColor="#3a6a80" stopOpacity=".4" />
        <stop offset="1" stopColor="#3a6a80" stopOpacity="0" />
      </radialGradient>
      <filter id="soft"><feGaussianBlur stdDeviation="1.200" /></filter>
      <filter id="glow" x="-20%" y="-50%" width="140%" height="200%"><feGaussianBlur stdDeviation="5" /></filter>
    </defs>
    <path d="M0 0h1280v692H0z" fill="url(#sky)" />
    <path d="M1050 0h230v200h-230z" fill="url(#corner)" />
    <path d="M1190 55L1248 0" stroke="#7fb0d8" strokeOpacity=".4" strokeWidth="2" filter="url(#soft)" />
    <path d="M690 700Q850 660 1090 540" stroke="#fff" strokeOpacity=".1" strokeWidth="12" fill="none" filter="url(#glow)" />
    <path d="M248 692q79-74 160 0z" fill="#fff" fillOpacity=".1" />
    <g fill="none" filter="url(#soft)">
      <path d="M560 694Q660 666 745 667" stroke="#a8ecff" strokeWidth="2" />
      <path d="M715 667Q785 662 820 674T876 695" stroke="#fff" strokeWidth="4" />
      <path d="M40 695Q120 655 200 622" stroke="#c4f8ff" strokeWidth="3" />
      <path d="M85 695Q130 635 195 582" stroke="#b6f4ff" strokeWidth="1.500" strokeOpacity=".7" />
      <path d="M93 695Q140 640 200 596" stroke="#b6f4ff" strokeWidth="1.500" strokeOpacity=".7" />
      <path d="M117 695Q155 645 215 615" stroke="#96ec8e" strokeWidth="3" />
    </g>
  </WallpaperArt>
);

function ArchiveWindow() {
  return (
    <Window $x={66} $y={66} $w={960} $h={501}>
      <TitleBar>
        <WinRarIcon />
        <TitleText as="h2">Win9x.zip</TitleText>
        <TitleButtons>
          <TitleButton aria-label="Maximize"><MaxGlyph /></TitleButton>
          <TitleButton aria-label="Close"><CloseGlyph /></TitleButton>
        </TitleButtons>
      </TitleBar>
      <MenuBar>
        <button>File</button><button>Commands</button><button>Tools</button>
      </MenuBar>
      <ToolArea>
        <Band $h={60}>
          <Grip />
          <ToolButton><AddArchiveIcon />Add</ToolButton>
          <ToolButton><ExtractIcon />Extract To</ToolButton>
        </Band>
        <Band $h={26}>
          <Grip />
          <UpButton aria-label="Up one level"><UpArrow /></UpButton>
          <Grip />
          <Combo>
            <WinRarIcon />
            <select aria-label="Archive path"><option>Win9x.zip</option></select>
            <ComboArrow><Arrow /></ComboArrow>
          </Combo>
        </Band>
      </ToolArea>
      <ArchiveList>
        <ArchiveHead>Name <SortUp /></ArchiveHead>
        <ArchiveColumn>
          <ArchiveRow $selected><FolderIcon dim />..</ArchiveRow>
          <ArchiveRow><FolderIcon />Win9x</ArchiveRow>
        </ArchiveColumn>
      </ArchiveList>
      <StatusBar>
        <StatusCell><DriveGlyph /><KeyGlyph /></StatusCell>
        <StatusCell $fill><SizeGrip /></StatusCell>
      </StatusBar>
    </Window>
  );
}

function ExplorerWindow() {
  return (
    <Window $x={185} $y={70} $w={800} $h={560}>
      <TitleBar $active>
        <FolderIcon />
        <TitleText>Virus.Win9x.Shoerec</TitleText>
        <TitleButtons>
          <TitleButton aria-label="Minimize"><MinGlyph /></TitleButton>
          <TitleButton aria-label="Maximize"><MaxGlyph /></TitleButton>
          <TitleButton aria-label="Close"><CloseGlyph /></TitleButton>
        </TitleButtons>
      </TitleBar>
      <Rebar>
        <NavButton $w={28} aria-label="Back"><BackCircle /></NavButton>
        <NavButton $w={28} aria-label="Forward"><ForwardCircle /></NavButton>
        <NavButton $w={10} aria-label="Recent pages"><HistoryArrow /></NavButton>
        <AddressBar aria-label="Address">
          <FolderSlot><FolderIcon /></FolderSlot>
          {crumbs.map((c, i) => (
            <React.Fragment key={i}>
              <CrumbArrow />
              <Crumb href="#">{c}</Crumb>
            </React.Fragment>
          ))}
          <Spacer />
          <IconButton $w={30} aria-label="Previous locations"><Arrow /></IconButton>
          <IconButton aria-label="Refresh"><RefreshIcon /></IconButton>
        </AddressBar>
        <SearchInput aria-label="Search" placeholder="Search Virus.Win9x.Shoerec" />
        <IconButton $w={21} aria-label="Go"><SearchIcon /></IconButton>
      </Rebar>
      <CommandBar>
        <Command>Organize <Arrow /></Command>
        <Command $gap={17}>Include in library <Arrow /></Command>
        <Command>Share with <Arrow /></Command>
        <Command>New folder</Command>
        <Spacer />
        <Command $gap={12} aria-label="Change view"><ViewIcon /></Command>
        <Command $gap={15} aria-label="More views"><Arrow /></Command>
        <Command $gap={12} aria-label="Preview pane"><PreviewIcon /></Command>
        <Command $gap={3} aria-label="Help"><HelpIcon /></Command>
      </CommandBar>
      <ExplorerBody>
        <NavPane aria-label="Folders">
          {navGroups.map((group, g) => (
            <NavGroup key={g}>
              {group.map(([icon, label], i) => (
                <li key={label}>
                  <NavItem href="#" $child={i > 0} $selected={label === "Favorites"}>
                    <NavGlyph name={icon} />{label}
                  </NavItem>
                </li>
              ))}
            </NavGroup>
          ))}
        </NavPane>
        <FilePane>
          <FileTable>
            <colgroup>
              <col /><col width="120" /><col width="120" /><col width="80" /><col width="40" />
            </colgroup>
            <thead>
              <tr>
                <th scope="col"><Inline $gap={5}>Name <SortUp /></Inline></th>
                <th scope="col">Date modified</th>
                <th scope="col">Type</th>
                <th scope="col">Size</th>
                <th aria-label="More columns" />
              </tr>
            </thead>
            <tbody>
              <tr>
                <td><Inline $gap={2}><InsectExe />Shoerec.exe</Inline></td>
                <td>3/10/2024 9:40 PM</td>
                <td>Application</td>
                <td>314 KB</td>
                <td />
              </tr>
            </tbody>
          </FileTable>
        </FilePane>
      </ExplorerBody>
      <DetailsPane><BigFolder /><p>1 item</p></DetailsPane>
    </Window>
  );
}

export default function App() {
  return (
    <>
      <GlobalStyle />
      <Screen>
        <Desktop>
          <Wallpaper />
          <IconGrid>
            {shortcuts.map(([label, col, row, art]) => (
              <Shortcut key={label} $col={col} $row={row}>
                {art}
                <ShortcutLabel>
                  {label.split("\n").map((line, i) => (
                    <React.Fragment key={line}>{i > 0 && <br />}{line}</React.Fragment>
                  ))}
                </ShortcutLabel>
              </Shortcut>
            ))}
          </IconGrid>
          <Brand>
            <span>ANY</span><BrandTriangle /><span>RUN</span>
          </Brand>
          <BuildInfo><p>Test Mode</p><p>Windows 7</p><p>Build 7601</p></BuildInfo>
          <ArchiveWindow />
          <ExplorerWindow />
        </Desktop>
        <Taskbar>
          <StartButton><WindowsFlag />Start</StartButton>
          <TaskButton aria-label="Internet Explorer"><IEIcon /></TaskButton>
          <TaskButton aria-label="Windows Explorer" $state="pressed"><NavGlyph name="libraries" /></TaskButton>
          <TaskButton aria-label="Media Player"><MediaIcon /></TaskButton>
          <TaskButton aria-label="Google Chrome"><ChromeMark size={17} /></TaskButton>
          <TaskButton aria-label="Microsoft Edge"><EdgeIcon /></TaskButton>
          <TaskButton aria-label="WinRAR" $state="open"><WinRarIcon /></TaskButton>
          <Spacer />
          <Tray>
            <VolumeIcon /><NetTrayIcon /><FlagTrayIcon />
            <Clock>11:27 PM</Clock>
            <NavGlyph name="desktop" />
          </Tray>
        </Taskbar>
      </Screen>
    </>
  );
}
